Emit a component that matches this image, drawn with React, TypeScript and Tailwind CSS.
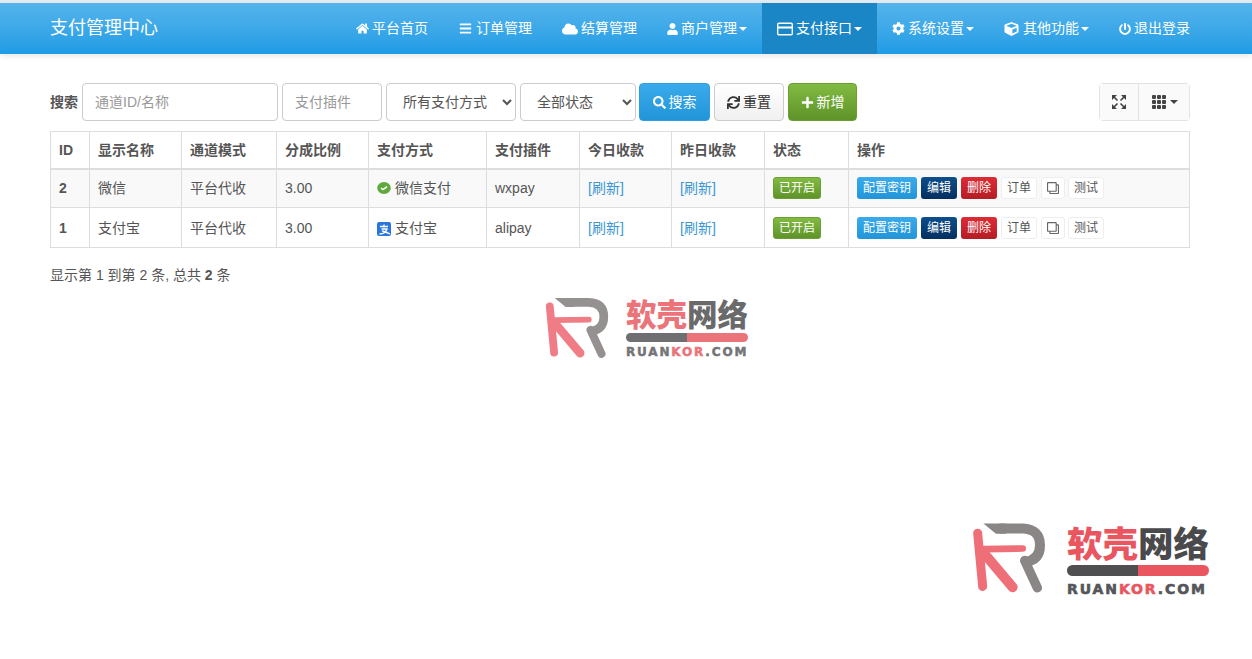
import React from 'react';
import {
  FaHome,
  FaBars,
  FaCloud,
  FaUser,
  FaCog,
  FaCube,
  FaPowerOff,
  FaSearch,
  FaSync,
  FaPlus,
  FaRegClone,
} from 'react-icons/fa';
import { BsGrid3X3GapFill } from 'react-icons/bs';

const Caret = ({ className = 'border-t-white' }: { className?: string }) => (
  <span className={`-ml-[1px] inline-block h-0 w-0 border-x-[4px] border-t-[4px] border-x-transparent ${className}`} />
);

const CardIcon = () => (
  <svg viewBox="0 0 16 14" className="h-[14px] w-[16px]" fill="none" stroke="currentColor" strokeWidth="1.4">
    <rect x="0.7" y="1.2" width="14.6" height="11.6" rx="1.2" />
    <path d="M1 5.5h14" strokeWidth="2" />
  </svg>
);

const ExpandIcon = () => (
  <svg viewBox="0 0 14 14" className="h-[14px] w-[14px]" fill="currentColor" stroke="currentColor">
    <path d="M0 0h5L0 5zM14 0H9l5 5zM0 14h5l-5-5zM14 14H9l5-5z" stroke="none" />
    <path d="M2 2l3.5 3.5M12 2L8.5 5.5M2 12l3.5-3.5M12 12L8.5 8.5" strokeWidth="1.6" fill="none" />
  </svg>
);

const navItems: { label: string; icon: React.ReactNode; caret?: boolean; active?: boolean }[] = [
  { label: '平台首页', icon: <FaHome className="h-[13px] w-[13px]" /> },
  { label: '订单管理', icon: <FaBars className="h-[13px] w-[15px]" /> },
  { label: '结算管理', icon: <FaCloud className="h-[14px] w-[16px]" /> },
  { label: '商户管理', icon: <FaUser className="h-[12px] w-[11px]" />, caret: true },
  { label: '支付接口', icon: <CardIcon />, caret: true, active: true },
  { label: '系统设置', icon: <FaCog className="h-[13px] w-[13px]" />, caret: true },
  { label: '其他功能', icon: <FaCube className="mr-[1px] h-[14px] w-[15px]" />, caret: true },
  { label: '退出登录', icon: <FaPowerOff className="h-[12px] w-[12px]" /> },
];

const rows = [
  { id: 2, name: '微信', mode: '平台代收', rate: '3.00', pay: '微信支付', plugin: 'wxpay', odd: true },
  { id: 1, name: '支付宝', mode: '平台代收', rate: '3.00', pay: '支付宝', plugin: 'alipay', odd: false },
];

const headers = ['ID', '显示名称', '通道模式', '分成比例', '支付方式', '支付插件', '今日收款', '昨日收款', '状态', '操作'];
const colWidths = [39, 92, 95, 92, 118, 93, 92, 93, 84, 341];

const WechatIcon = () => (
  <svg viewBox="0 0 14 14" className="mr-[4px] h-[14px] w-[14px] shrink-0">
    <ellipse cx="7" cy="7" rx="6.8" ry="6" fill="#5fa83c" />
    <path d="M4 7l2 1.6L10 5.6" fill="none" stroke="#fff" strokeWidth="1.6" />
  </svg>
);

const AlipayIcon = () => (
  <svg viewBox="0 0 14 14" className="mr-[4px] h-[14px] w-[14px] shrink-0">
    <rect width="14" height="14" rx="2" fill="#2a76e0" />
    <path d="M3 4.5h8M7 2.5v3M4.5 7h5.5C9 10 6 12 2.5 12M5 9c2 0 5 1.5 8 3" fill="none" stroke="#fff" strokeWidth="1.3" />
  </svg>
);

const SmallBtn = ({ className, children }: { className: string; children: React.ReactNode }) => (
  <span className={`flex h-[22px] items-center justify-center rounded-[3px] text-[12px] ${className}`}>{children}</span>
);

const LogoMark = ({ className }: { className: string }) => (
  <svg viewBox="35 40 225 215" className={className}>
    <path d="M72 47 L140 47 L140 78 L110 78 Z" fill="#8a8686" />
    <path d="M120 62 L190 62 Q242 64 242 112 Q242 156 198 162" fill="none" stroke="#8a8686" strokeWidth="30" />
    <path d="M196 158 L234 240" fill="none" stroke="#8a8686" strokeWidth="28" strokeLinecap="round" />
    <path d="M55 76 L70 236" fill="none" stroke="#ef6f78" strokeWidth="27" strokeLinecap="round" />
    <path d="M72 124 L190 122" fill="none" stroke="#ef6f78" strokeWidth="20" strokeLinecap="round" />
    <path d="M74 136 L160 238" fill="none" stroke="#ef6f78" strokeWidth="30" strokeLinecap="round" />
  </svg>
);

const bigLogo = (
  <div className="flex items-start">
    <LogoMark className="-ml-[3px] -mt-[2px] mr-[21px] h-[72px] w-[75px]" />
    <div className="flex w-[142px] flex-col">
      <div className="flex h-[38px] items-center text-[35.5px] leading-none font-black whitespace-nowrap font-['Noto_Sans_CJK_SC',sans-serif]">
        <span className="text-[#e9565f]">软壳</span>
        <span className="text-[#4a4a4c]">网络</span>
      </div>
      <div className="mt-[4px] flex h-[11px] overflow-hidden rounded-full">
        <div className="w-[50%] bg-[#4f4f51]" />
        <div className="flex-1 bg-[#e9565f]" />
      </div>
      <div className="mt-[6px] text-[14px] leading-[14px] font-bold tracking-[1.9px] whitespace-nowrap text-[#55555a] [-webkit-text-stroke:0.6px] font-['DejaVu_Sans',sans-serif]">
        RUAN<span className="text-[#e9565f]">KOR</span>.COM
      </div>
    </div>
  </div>
);

const smallLogo = (
  <div className="flex items-start opacity-90">
    <LogoMark className="-ml-[2px] -mt-[2px] mr-[17px] h-[64px] w-[65px]" />
    <div className="flex w-[122px] flex-col">
      <div className="flex h-[33px] items-center text-[30.5px] leading-none font-black whitespace-nowrap font-['Noto_Sans_CJK_SC',sans-serif]">
        <span className="text-[#e9646c]">软壳</span>
        <span className="text-[#5a5a5c]">网络</span>
      </div>
      <div className="mt-[3px] flex h-[9px] overflow-hidden rounded-full">
        <div className="w-[50%] bg-[#606062]" />
        <div className="flex-1 bg-[#e9646c]" />
      </div>
      <div className="mt-[4px] text-[12px] leading-[12px] font-bold tracking-[1.85px] whitespace-nowrap text-[#66666a] [-webkit-text-stroke:0.5px] font-['DejaVu_Sans',sans-serif]">
        RUAN<span className="text-[#e9646c]">KOR</span>.COM
      </div>
    </div>
  </div>
);

const App: React.FC = () => {
  return (
    <div className="relative h-[659px] overflow-hidden bg-white text-[14px] text-[#555] font-['Liberation_Sans','Noto_Sans_CJK_SC',sans-serif]">
      <div className="h-[3px] bg-[#e6ecf0]" />
      <nav className="flex h-[51px] items-stretch justify-between bg-gradient-to-b from-[#54b4eb] to-[#1d9ce5] pl-[50px] pr-[47px] text-white shadow-[0_2px_6px_rgba(0,0,0,0.1)]">
        <div className="flex items-center text-[18px]">支付管理中心</div>
        <div className="flex">
          {navItems.map((item) => (
            <a
              key={item.label}
              href="#"
              className={`flex items-center gap-[3px] px-[15px] ${item.active ? 'bg-[#1a86c5]' : ''}`}
            >
              {item.icon}
              <span>{item.label}</span>
              {item.caret && <Caret />}
            </a>
          ))}
        </div>
      </nav>

      <main className="pl-[50px] pr-[62px] pt-[29px]">
        <div className="flex h-[38px] items-stretch gap-[4px]">
          <label className="flex items-center font-bold">搜索</label>
          <input
            placeholder="通道ID/名称"
            className="w-[196px] rounded-[4px] border border-[#ccc] px-[12px] placeholder:text-[#999]"
          />
          <input
            placeholder="支付插件"
            className="w-[100px] rounded-[4px] border border-[#ccc] px-[12px] placeholder:text-[#999]"
          />
          <select className="w-[130px] rounded-[4px] border border-[#ccc] bg-white px-[12px]">
            <option>所有支付方式</option>
          </select>
          <select className="w-[116px] rounded-[4px] border border-[#ccc] bg-white px-[12px]">
            <option>全部状态</option>
          </select>
          <button className="-ml-[1px] flex w-[71px] items-center justify-center gap-[3px] rounded-[4px] border border-[#2d9fe0] bg-gradient-to-b from-[#39abec] to-[#2195d9] text-white">
            <FaSearch className="h-[13px] w-[13px]" />
            搜索
          </button>
          <button className="flex w-[70px] items-center justify-center gap-[3px] rounded-[4px] border border-[#ccc] bg-gradient-to-b from-white to-[#f0f0f0] text-[#333]">
            <FaSync className="h-[13px] w-[13px]" />
            重置
          </button>
          <button className="flex w-[69px] items-center justify-center gap-[3px] rounded-[4px] border border-[#6a9f33] bg-gradient-to-b from-[#82bb42] to-[#5f9329] text-white">
            <FaPlus className="h-[13px] w-[13px]" />
            新增
          </button>
          <div className="ml-auto flex rounded-[4px] border border-[#e3e3e3] text-[#444]">
            <button className="flex w-[39px] items-center justify-center border-r border-[#e3e3e3] bg-[#fafafa]">
              <ExpandIcon />
            </button>
            <button className="flex w-[50px] items-center justify-center gap-[4px] bg-[#fafafa]">
              <BsGrid3X3GapFill className="h-[16px] w-[16px]" />
              <Caret className="border-t-[#444]" />
            </button>
          </div>
        </div>

        <table className="mt-[10px] w-[1139px] table-fixed border-collapse border border-[#ddd]">
          <colgroup>
            {colWidths.map((w, i) => (
              <col key={i} style={{ width: w }} />
            ))}
          </colgroup>
          <thead>
            <tr className="h-[37px]">
              {headers.map((h) => (
                <th key={h} className="border border-b-2 border-[#ddd] px-[8px] pt-[1px] text-left text-[14px] font-bold">
                  {h}
                </th>
              ))}
            </tr>
          </thead>
          <tbody>
            {rows.map((row) => {
              const cell = row.odd ? 'border border-[#ddd] px-[8px]' : 'border border-[#ddd] px-[8px] pt-[2px]';
              const btnCell = row.odd ? 'border border-[#ddd] px-[8px]' : 'border border-[#ddd] px-[8px] pt-[1px]';
              return (
                <tr key={row.id} className={row.odd ? 'h-[39px] bg-[#f9f9f9]' : 'h-[40px] bg-white'}>
                  <td className={`${cell} font-bold`}>{row.id}</td>
                  <td className={cell}>{row.name}</td>
                  <td className={cell}>{row.mode}</td>
                  <td className={cell}>{row.rate}</td>
                  <td className={cell}>
                    <div className="flex items-center">
                      {row.odd ? <WechatIcon /> : <AlipayIcon />}
                      {row.pay}
                    </div>
                  </td>
                  <td className={cell}>{row.plugin}</td>
                  <td className={`${cell} text-[#3a97d4]`}>[刷新]</td>
                  <td className={`${cell} text-[#3a97d4]`}>[刷新]</td>
                  <td className={btnCell}>
                    <SmallBtn className="w-[48px] border border-[#6a9f33] bg-gradient-to-b from-[#82bb42] to-[#5f9329] text-white">已开启</SmallBtn>
                  </td>
                  <td className={btnCell}>
                    <div className="flex gap-[4px]">
                      <SmallBtn className="w-[60px] bg-gradient-to-b from-[#39abec] to-[#2195d9] text-white">配置密钥</SmallBtn>
                      <SmallBtn className="w-[36px] bg-gradient-to-b from-[#0d4f8c] to-[#052f5f] text-white">编辑</SmallBtn>
                      <SmallBtn className="w-[36px] bg-gradient-to-b from-[#dd2c36] to-[#b51c24] text-white">删除</SmallBtn>
                      <SmallBtn className="w-[36px] border border-[#eee] bg-white text-[#555]">订单</SmallBtn>
                      <SmallBtn className="w-[24px] border border-[#eee] bg-white text-[#666]">
                        <FaRegClone className="h-[12px] w-[12px] -scale-x-100" />
                      </SmallBtn>
                      <SmallBtn className="-ml-[1px] w-[36px] border border-[#eee] bg-white text-[#555]">测试</SmallBtn>
                    </div>
                  </td>
                </tr>
              );
            })}
          </tbody>
        </table>

        <p className="mt-[17px] text-[14px] leading-[20px]">
          显示第 1 到第 2 条, 总共 <b>2</b> 条
        </p>
      </main>

      <div className="absolute left-[546px] top-[297px]">{smallLogo}</div>
      <div className="absolute left-[974px] top-[523px]">{bigLogo}</div>
    </div>
  );
};

export default App;
